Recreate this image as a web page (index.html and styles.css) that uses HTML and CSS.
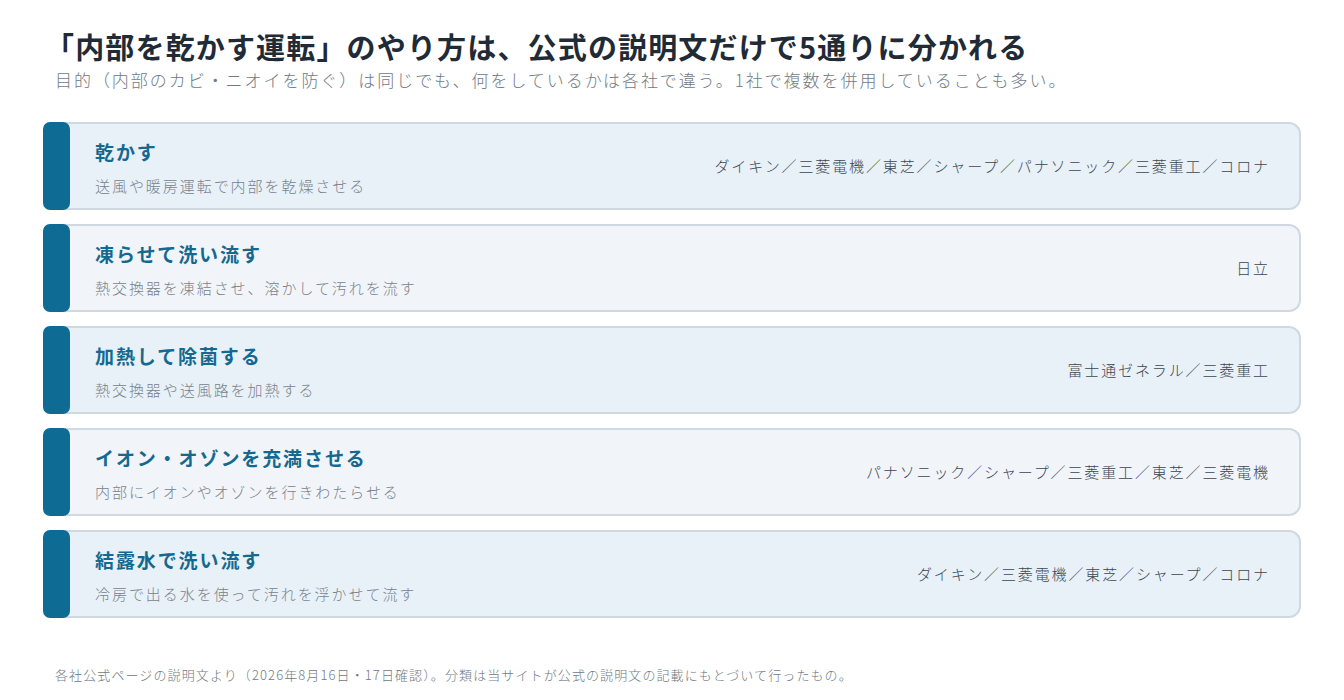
FILE: index.html
```html
<!DOCTYPE html>
<html lang="ja">
<head>
    <meta charset="UTF-8">
    <meta name="viewport" content="width=device-width, initial-scale=1.0">
    <title>内部を乾かす運転の分類</title>
    <link rel="stylesheet" href="styles.css">
</head>
<body>
    <div class="page">
        <div class="header">
            <h1>「内部を乾かす運転」のやり方は、公式の説明文だけで5通りに分かれる</h1>
            <p class="lead">目的（内部のカビ・ニオイを防ぐ）は同じでも、何をしているかは各社で違う。1社で複数を併用していることも多い。</p>
        </div>

        <div class="list">
            <div class="card">
                <div class="bar"></div>
                <div class="body">
                    <div class="text">
                        <div class="name">乾かす</div>
                        <div class="desc">送風や暖房運転で内部を乾燥させる</div>
                    </div>
                    <div class="makers">ダイキン／三菱電機／東芝／シャープ／パナソニック／三菱重工／コロナ</div>
                </div>
            </div>

            <div class="card alt">
                <div class="bar"></div>
                <div class="body">
                    <div class="text">
                        <div class="name">凍らせて洗い流す</div>
                        <div class="desc">熱交換器を凍結させ、溶かして汚れを流す</div>
                    </div>
                    <div class="makers">日立</div>
                </div>
            </div>

            <div class="card">
                <div class="bar"></div>
                <div class="body">
                    <div class="text">
                        <div class="name">加熱して除菌する</div>
                        <div class="desc">熱交換器や送風路を加熱する</div>
                    </div>
                    <div class="makers">富士通ゼネラル／三菱重工</div>
                </div>
            </div>

            <div class="card alt">
                <div class="bar"></div>
                <div class="body">
                    <div class="text">
                        <div class="name">イオン・オゾンを充満させる</div>
                        <div class="desc">内部にイオンやオゾンを行きわたらせる</div>
                    </div>
                    <div class="makers">パナソニック／シャープ／三菱重工／東芝／三菱電機</div>
                </div>
            </div>

            <div class="card">
                <div class="bar"></div>
                <div class="body">
                    <div class="text">
                        <div class="name">結露水で洗い流す</div>
                        <div class="desc">冷房で出る水を使って汚れを浮かせて流す</div>
                    </div>
                    <div class="makers">ダイキン／三菱電機／東芝／シャープ／コロナ</div>
                </div>
            </div>
        </div>

        <p class="note">各社公式ページの説明文より（2026年8月16日・17日確認）。分類は当サイトが公式の説明文の記載にもとづいて行ったもの。</p>
    </div>
</body>
</html>
```

FILE: styles.css
```css
body {
    margin: 0;
    background: #ffffff;
    font-family: "Noto Sans CJK JP", "Noto Sans", sans-serif;
    color: #2b3640;
}

.page {
    padding: 0 43px;
}

.header {
    padding: 27px 0 0 12px;
}

h1 {
    margin: 0;
    font-size: 29px;
    line-height: 38px;
    font-weight: 700;
    letter-spacing: 0.04em;
    color: #1f2b36;
    text-indent: -10px;
}

.lead {
    margin: 0;
    font-size: 17px;
    line-height: 26px;
    font-weight: 300;
    letter-spacing: 0.115em;
    color: #6f7a85;
    position: relative;
    top: 2px;
}

.list {
    margin-top: 31px;
    display: flex;
    flex-direction: column;
    gap: 14px;
}

.card {
    display: flex;
    height: 84px;
    background: #e8f1f8;
    border: 2px solid #d0d9e1;
    border-left: none;
    border-radius: 12px;
}

.card.alt {
    background: #f1f5f9;
}

.bar {
    width: 27px;
    margin: -2px 0;
    background: #0e6b94;
    border-radius: 7px;
    flex-shrink: 0;
}

.body {
    flex: 1;
    display: flex;
    align-items: center;
    justify-content: space-between;
    padding: 0 29px 0 25px;
}

.text {
    align-self: flex-start;
    padding-top: 14px;
}

.name {
    font-size: 19px;
    line-height: 28px;
    font-weight: 700;
    letter-spacing: 0.1em;
    color: #156990;
}

.desc {
    margin-top: 9px;
    font-size: 15px;
    line-height: 22px;
    font-weight: 300;
    letter-spacing: 0.13em;
    color: #78828c;
}

.makers {
    font-size: 15px;
    line-height: 22px;
    font-weight: 300;
    letter-spacing: 0.125em;
    color: #3b4651;
}

.note {
    margin: 47px 0 0 12px;
    font-size: 13px;
    line-height: 20px;
    font-weight: 300;
    letter-spacing: 0.085em;
    color: #6f7a85;
}
```
